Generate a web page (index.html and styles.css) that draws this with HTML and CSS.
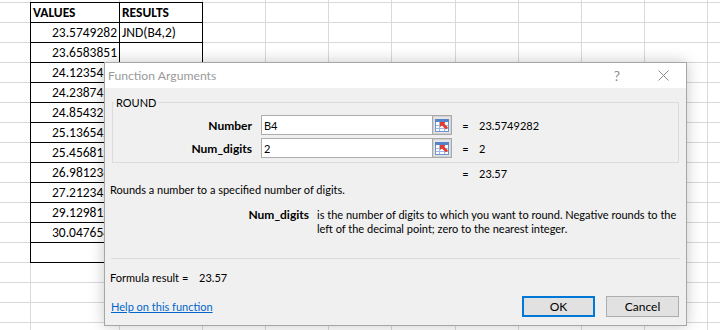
FILE: index.html
```html
<!DOCTYPE html>
<html lang="en">
<head>
    <meta charset="UTF-8">
    <title>Function Arguments - ROUND</title>
    <link rel="stylesheet" href="styles.css">
</head>
<body>
    <!-- Worksheet behind the dialog -->
    <div class="sheet">
        <div class="values">
            <div class="cell head">VALUES</div>
            <div class="cell head">RESULTS</div>
            <div class="cell num">23.5749282</div>
            <div class="cell">JND(B4,2)</div>
            <div class="cell num">23.6583851</div>
            <div class="cell"></div>
            <div class="cell num">24.1235412</div>
            <div class="cell"></div>
            <div class="cell num">24.2387451</div>
            <div class="cell"></div>
            <div class="cell num">24.8543215</div>
            <div class="cell"></div>
            <div class="cell num">25.1365421</div>
            <div class="cell"></div>
            <div class="cell num">25.4568123</div>
            <div class="cell"></div>
            <div class="cell num">26.9812365</div>
            <div class="cell"></div>
            <div class="cell num">27.2123457</div>
            <div class="cell"></div>
            <div class="cell num">29.1298123</div>
            <div class="cell"></div>
            <div class="cell num">30.0476543</div>
            <div class="cell"></div>
            <div class="cell"></div>
            <div class="cell"></div>
        </div>
    </div>

    <!-- Function Arguments dialog -->
    <div class="dialog">
        <div class="titlebar">
            <span class="title">Function Arguments</span>
            <span class="caption-btn">?</span>
            <span class="caption-btn">
                <svg width="11" height="11" viewBox="0 0 11 11"><path d="M0.5 0.5 L10.5 10.5 M10.5 0.5 L0.5 10.5" stroke="#8c8c8c" stroke-width="1"/></svg>
            </span>
        </div>

        <div class="dialog-body">
            <div class="group">
                <div class="group-title">ROUND</div>
                <div class="args">
                    <label class="arg-name">Number</label>
                    <div class="arg-field">
                        <input class="arg-input" type="text" value="B4">
                        <span class="ref-btn">
                            <svg width="14" height="13" viewBox="0 0 14 13">
                                <rect x="0.5" y="0.5" width="13" height="12" fill="#fff" stroke="#6d93cf"/>
                                <rect x="0" y="0" width="14" height="3" fill="#5583c8"/>
                                <path d="M1 6.5 H13 M1 9.5 H13 M4.5 3 V12 M9.5 3 V12" stroke="#9db8e2"/>
                                <path d="M5 3 L10.5 3 L9 4.5 L13 8.5 L11 10.5 L7 6.5 L5 8 Z" fill="#e23a2c"/>
                            </svg>
                        </span>
                    </div>
                    <span class="eq">=</span>
                    <span class="arg-value">23.5749282</span>

                    <label class="arg-name">Num_digits</label>
                    <div class="arg-field">
                        <input class="arg-input" type="text" value="2">
                        <span class="ref-btn">
                            <svg width="14" height="13" viewBox="0 0 14 13">
                                <rect x="0.5" y="0.5" width="13" height="12" fill="#fff" stroke="#6d93cf"/>
                                <rect x="0" y="0" width="14" height="3" fill="#5583c8"/>
                                <path d="M1 6.5 H13 M1 9.5 H13 M4.5 3 V12 M9.5 3 V12" stroke="#9db8e2"/>
                                <path d="M5 3 L10.5 3 L9 4.5 L13 8.5 L11 10.5 L7 6.5 L5 8 Z" fill="#e23a2c"/>
                            </svg>
                        </span>
                    </div>
                    <span class="eq">=</span>
                    <span class="arg-value">2</span>
                </div>
            </div>

            <div class="result-row">
                <span class="eq">=</span>
                <span class="arg-value">23.57</span>
            </div>

            <p class="fn-desc">Rounds a number to a specified number of digits.</p>

            <div class="arg-help">
                <b class="arg-help-name">Num_digits</b>
                <span class="arg-help-text">is the number of digits to which you want to round. Negative rounds to the<br>left of the decimal point; zero to the nearest integer.</span>
            </div>

            <div class="footer">
                <div class="formula-result">Formula result = <span class="formula-value">23.57</span></div>
                <div class="actions">
                    <a class="help-link" href="#">Help on this function</a>
                    <div class="buttons">
                        <button class="btn btn-default">OK</button>
                        <button class="btn">Cancel</button>
                    </div>
                </div>
            </div>
        </div>
    </div>
</body>
</html>
```

FILE: styles.css
```css
body {
    margin: 0;
    width: 720px;
    height: 330px;
    overflow: hidden;
    position: relative;
    background: #fff;
}

/* Worksheet grid */
.sheet {
    height: 330px;
    padding-top: 2px;
    box-sizing: border-box;
    font-family: Carlito, Lato, sans-serif;
    font-size: 13.5px;
    color: #000;
    background-color: #fff;
    background-image:
        repeating-linear-gradient(to bottom, #d9d9d9 0 1px, transparent 1px 20px),
        linear-gradient(#d9d9d9, #d9d9d9),
        linear-gradient(#d9d9d9, #d9d9d9),
        linear-gradient(#d9d9d9, #d9d9d9),
        repeating-linear-gradient(to right, #d9d9d9 0 1px, transparent 1px 63px),
        repeating-linear-gradient(to right, #d9d9d9 0 1px, transparent 1px 63px);
    background-size: 100% 100%, 1px 100%, 1px 100%, 1px 100%, 189px 100%, 265px 100%;
    background-position: 0 2px, 30px 0, 119px 0, 202px 0, 265px 0, 455px 0;
    background-repeat: repeat-y, no-repeat, no-repeat, no-repeat, no-repeat, no-repeat;
}
.values {
    display: grid;
    grid-template-columns: 89px 83px;
    grid-auto-rows: 20px;
    width: fit-content;
    margin-left: 30px;
    border-left: 1px solid #000;
    border-top: 1px solid #000;
    background: #fff;
}
.cell {
    border-right: 1px solid #000;
    border-bottom: 1px solid #000;
    padding: 0 2px;
    line-height: 19px;
    white-space: nowrap;
    overflow: hidden;
}
.cell.head {
    font-weight: 700;
}
.cell.num {
    text-align: right;
}

/* Dialog */
.dialog {
    position: absolute;
    left: 104px;
    top: 62px;
    width: 583px;
    box-sizing: border-box;
    border: 1px solid #a6a6a6;
    background: #f0f0f0;
    box-shadow: 0 0 14px rgba(0,0,0,0.22);
    font-family: Lato, sans-serif;
    font-size: 11px;
    color: #000;
}
.titlebar {
    display: flex;
    align-items: center;
    height: 25px;
    background: #fff;
}
.title {
    flex: 1;
    padding-left: 3px;
    font-size: 12.2px;
    color: #9a9a9a;
}
.caption-btn {
    width: 46px;
    height: 25px;
    display: flex;
    align-items: center;
    justify-content: center;
    color: #8c8c8c;
    font-size: 14px;
}

.dialog-body {
    padding: 14px 7px 8px 5px;
}

/* ROUND group box */
.group {
    margin-left: 2px;
    border: 1px solid #dcdcdc;
}
.group-title {
    width: fit-content;
    margin: -9px 0 0 1px;
    padding: 0 2px;
    line-height: 17px;
    background: #f0f0f0;
}
.args {
    display: grid;
    grid-template-columns: 139px 191px 9px auto;
    grid-auto-rows: 20px;
    column-gap: 9px;
    row-gap: 3px;
    align-items: center;
    margin-top: 4px;
    padding-bottom: 4px;
}
.arg-name {
    text-align: right;
    font-weight: 700;
    font-size: 12px;
}
.arg-field {
    display: flex;
    height: 20px;
}
.arg-input {
    flex: 1;
    min-width: 0;
    margin: 0;
    padding: 0 2px;
    border: 1px solid #abadb3;
    border-right: none;
    font: inherit;
    background: #fff;
}
.ref-btn {
    width: 20px;
    height: 20px;
    box-sizing: border-box;
    border: 1px solid #a9a9a9;
    box-shadow: inset 0 0 0 1px #d2d2d2;
    background: #e6e6e6;
    display: flex;
    align-items: center;
    justify-content: center;
}
.eq {
    text-align: center;
}

.result-row {
    display: flex;
    gap: 9px;
    margin-top: 3px;
    padding-left: 351px;
    line-height: 16px;
}
.result-row .eq {
    width: 9px;
}

.fn-desc {
    margin: 0;
    line-height: 16px;
}

.arg-help {
    display: grid;
    grid-template-columns: 199px 1fr;
    column-gap: 8px;
    margin-top: 10px;
    line-height: 14px;
}
.arg-help-name {
    text-align: right;
    font-size: 12px;
}
.arg-help-text {
    white-space: nowrap;
}

/* Bottom area */
.footer {
    margin: 22px -1px 0 1px;
    border-top: 1px solid #dcdcdc;
}
.formula-result {
    margin: 11px 0 0 -1px;
    line-height: 16px;
}
.formula-value {
    margin-left: 8px;
}
.actions {
    display: flex;
    justify-content: space-between;
    align-items: center;
    margin-top: 10px;
}
.help-link {
    color: #0066cc;
    text-decoration: underline;
}
.buttons {
    display: flex;
    gap: 11px;
    margin-right: 1px;
}
.btn {
    width: 73px;
    height: 21px;
    box-sizing: border-box;
    border: 1px solid #adadad;
    background: #e1e1e1;
    font: inherit;
    font-size: 12px;
    color: #000;
    padding: 0;
}
.btn-default {
    border: 2px solid #0078d7;
}
```
